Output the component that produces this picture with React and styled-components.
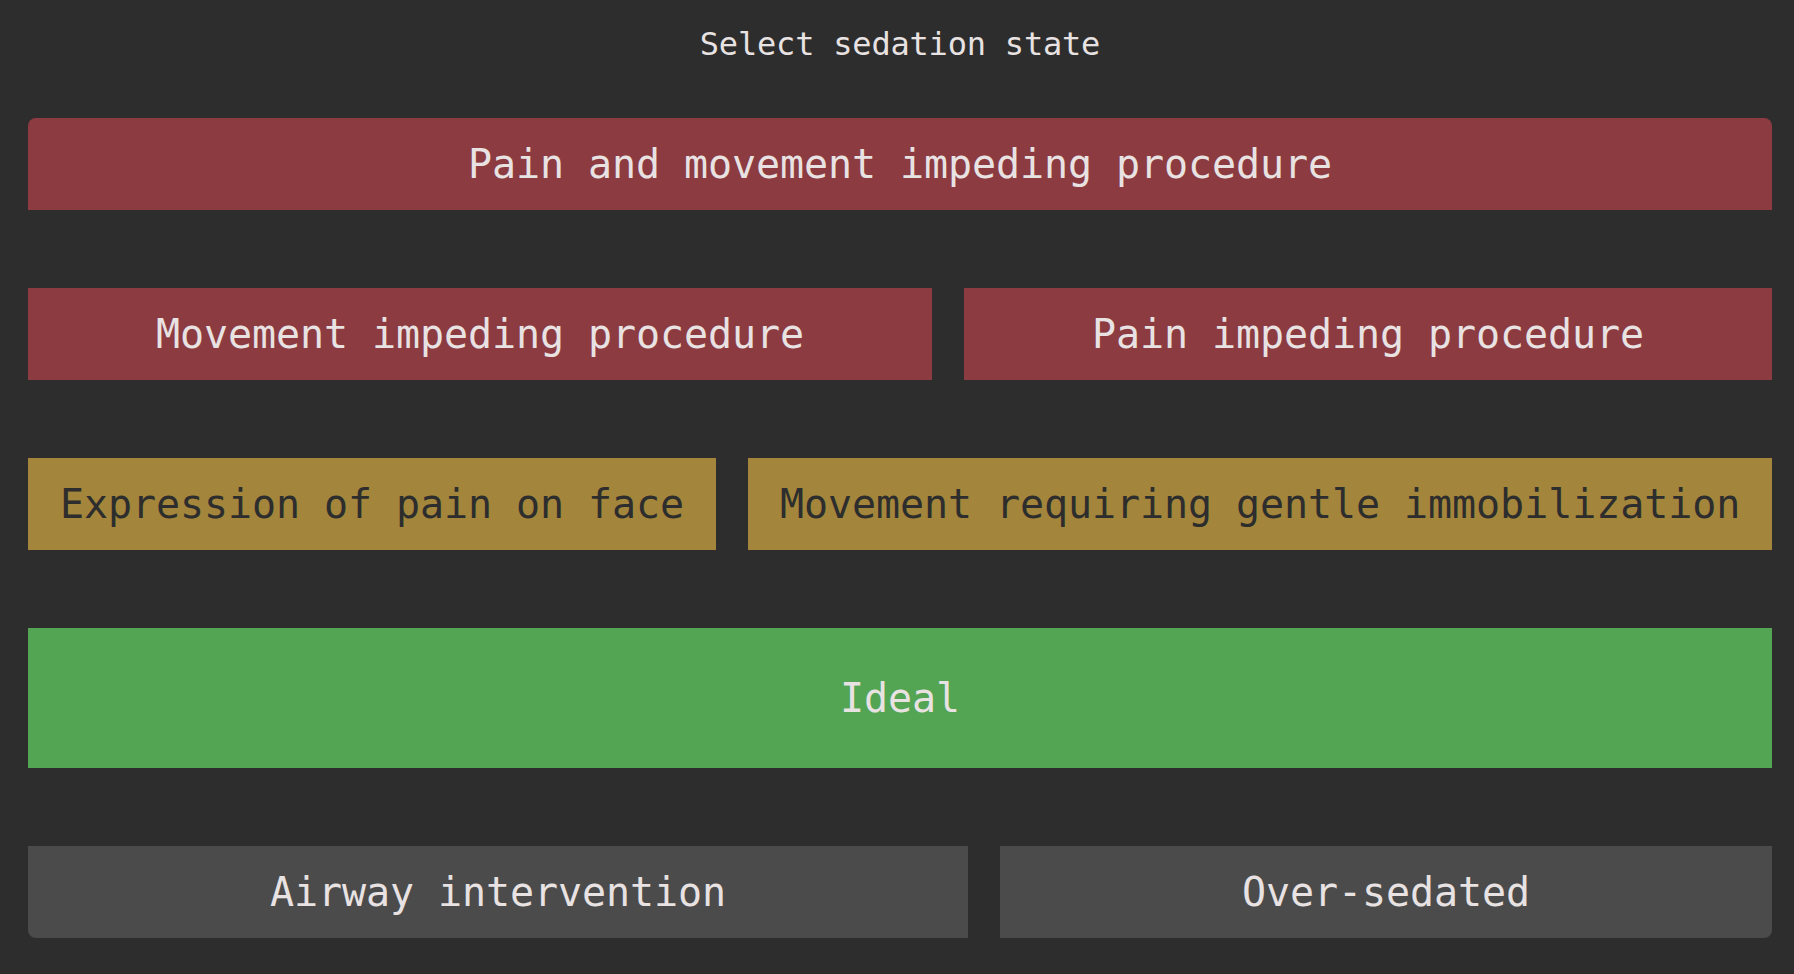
import React from 'react';
import styled, { createGlobalStyle } from 'styled-components';

const rows = [
  [{ label: 'Pain and movement impeding procedure', tone: 'red' }],
  [
    { label: 'Movement impeding procedure', tone: 'red' },
    { label: 'Pain impeding procedure', tone: 'red' },
  ],
  [
    { label: 'Expression of pain on face', tone: 'gold' },
    { label: 'Movement requiring gentle immobilization', tone: 'gold' },
  ],
  [{ label: 'Ideal', tone: 'green', tall: true }],
  [
    { label: 'Airway intervention', tone: 'gray' },
    { label: 'Over-sedated', tone: 'gray' },
  ],
];

const tones = {
  red: { bg: '#8c3b41', fg: '#e8e2e2' },
  gold: { bg: '#a3853b', fg: '#2d2d2d' },
  green: { bg: '#53a553', fg: '#e8e2e2' },
  gray: { bg: '#4b4b4b', fg: '#e8e2e2' },
};

const GlobalStyle = createGlobalStyle`
  html, body {
    margin: 0;
    background: #2d2d2d;
  }
  body {
    font-family: 'DejaVu Sans Mono', 'Liberation Mono', monospace;
  }
`;

const Page = styled.div`
  min-height: 974px;
  box-sizing: border-box;
  padding: 0 22px 36px 28px;
  display: flex;
  flex-direction: column;
`;

const Title = styled.h1`
  margin: 0;
  padding: 24px 0 54px;
  font-size: 32px;
  line-height: 40px;
  font-weight: 400;
  letter-spacing: -0.2px;
  color: #e8e2e2;
  text-align: center;
`;

const Options = styled.div`
  display: flex;
  flex-direction: column;
  gap: 78px;
`;

const Row = styled.div`
  display: flex;
  gap: 32px;
`;

const Option = styled.button`
  flex: 1 1 auto;
  border: none;
  border-radius: 0;
  margin: 0;
  padding: ${(p) => (p.$tall ? '46px 32px' : '22px 32px')};
  font-family: inherit;
  font-size: 40px;
  line-height: 48px;
  letter-spacing: -0.08px;
  white-space: nowrap;
  text-align: center;
  cursor: pointer;
  background: ${(p) => tones[p.$tone].bg};
  color: ${(p) => tones[p.$tone].fg};

  ${Options} > ${Row}:first-child > & {
    border-top-left-radius: 8px;
    border-top-right-radius: 8px;
  }
  ${Options} > ${Row}:last-child > &:first-child {
    border-bottom-left-radius: 8px;
  }
  ${Options} > ${Row}:last-child > &:last-child {
    border-bottom-right-radius: 8px;
  }
`;

export default function App() {
  return (
    <Page>
      <GlobalStyle />
      <Title>Select sedation state</Title>
      <Options>
        {rows.map((row, i) => (
          <Row key={i}>
            {row.map((opt) => (
              <Option key={opt.label} $tone={opt.tone} $tall={opt.tall}>
                {opt.label}
              </Option>
            ))}
          </Row>
        ))}
      </Options>
    </Page>
  );
}
